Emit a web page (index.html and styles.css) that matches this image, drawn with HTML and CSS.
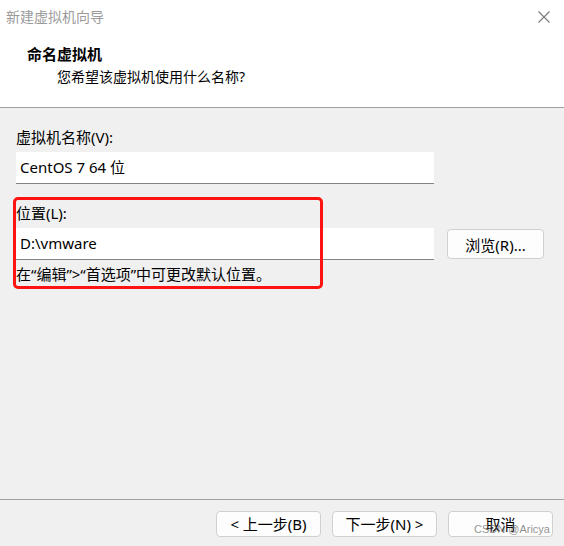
FILE: index.html
```html
<!DOCTYPE html>
<html lang="zh-CN">
<head>
<meta charset="utf-8">
<title>新建虚拟机向导</title>
<link rel="stylesheet" href="styles.css">
</head>
<body>
<div class="window">
  <div class="titlebar">
    <span class="title">新建虚拟机向导</span>
    <svg class="close" width="12" height="12" viewBox="0 0 12 12"><path d="M0.5 0.5 L11.5 11.5 M11.5 0.5 L0.5 11.5" stroke="#7a7a7a" stroke-width="1.1" fill="none"/></svg>
  </div>
  <div class="header">
    <div class="h-title">命名虚拟机</div>
    <div class="h-sub">您希望该虚拟机使用什么名称?</div>
  </div>
  <div class="content">
    <div class="field">
      <div class="label">虚拟机名称(V):</div>
      <div class="row"><div class="input">CentOS 7 64 位</div></div>
    </div>
    <div class="field location">
      <div class="label">位置(L):</div>
      <div class="row"><div class="input">D:\vmware</div><button class="btn browse">浏览(R)...</button></div>
      <div class="hint">在“编辑”&gt;“首选项”中可更改默认位置。</div>
      <div class="annotation"></div>
    </div>
  </div>
  <div class="footer">
    <button class="btn nav">&lt; 上一步(B)</button>
    <button class="btn nav">下一步(N) &gt;</button>
    <button class="btn nav">取消</button>
  </div>
  <div class="watermark">CSDN @Aricya</div>
</div>
</body>
</html>
```
FILE: styles.css
```css
* { box-sizing: border-box; }
html, body { margin: 0; padding: 0; }
body {
  background: #f0f0f0;
  font-family: "Noto Sans", "Noto Sans CJK SC", sans-serif;
  font-size: 14px;
  color: #000;
}
.window {
  position: relative;
  width: 564px;
  height: 546px;
  display: flex;
  flex-direction: column;
  background: #f0f0f0;
}
.titlebar {
  height: 34px;
  background: #fff;
  display: flex;
  align-items: center;
  justify-content: space-between;
  padding: 0 14px 0 6px;
}
.title {
  color: #9a9a9a;
  font-size: 14px;
  line-height: 20px;
}
.close { display: block; }
.header {
  background: #fff;
  padding: 10px 0 19px 27px;
  border-bottom: 1px solid #a0a0a0;
}
.h-title {
  font-weight: bold;
  font-size: 15px;
  line-height: 20px;
}
.h-sub {
  margin-top: 2px;
  padding-left: 30px;
  line-height: 22px;
}
.content {
  flex: 1;
  padding: 0 16px;
  font-size: 15px;
}
.field { margin-top: 19px; }
.location { position: relative; }
.label { line-height: 20px; }
.row {
  margin-top: 5px;
  display: flex;
  align-items: center;
  height: 32px;
}
.input {
  width: 418px;
  height: 32px;
  background: #fff;
  border-bottom: 1px solid #858585;
  padding-left: 4px;
  line-height: 31px;
}
.btn {
  font-family: "Noto Sans", "Noto Sans CJK SC", sans-serif;
  font-size: 15px;
  color: #000;
  background: #fdfdfd;
  border: 1px solid #d0d0d0;
  border-radius: 4px;
  padding: 0;
}
.browse {
  margin-left: 13px;
  width: 97px;
  height: 30px;
}
.hint {
  margin-top: 4px;
  line-height: 20px;
}
.annotation {
  position: absolute;
  left: -3px;
  top: -6px;
  width: 310px;
  height: 92px;
  border: 3px solid #ff1212;
  border-radius: 5px;
}
.footer {
  height: 47px;
  border-top: 1px solid #a0a0a0;
  padding: 11px 11px 0 0;
  display: flex;
  justify-content: flex-end;
  align-items: flex-start;
  gap: 11px;
}
.nav {
  width: 105px;
  height: 26px;
  line-height: 24px;
}
.watermark {
  position: absolute;
  left: 474px;
  top: 523px;
  font-family: "Liberation Sans", Arial, sans-serif;
  font-size: 11px;
  line-height: 13px;
  color: rgba(110, 110, 110, 0.75);
  white-space: nowrap;
}
```
